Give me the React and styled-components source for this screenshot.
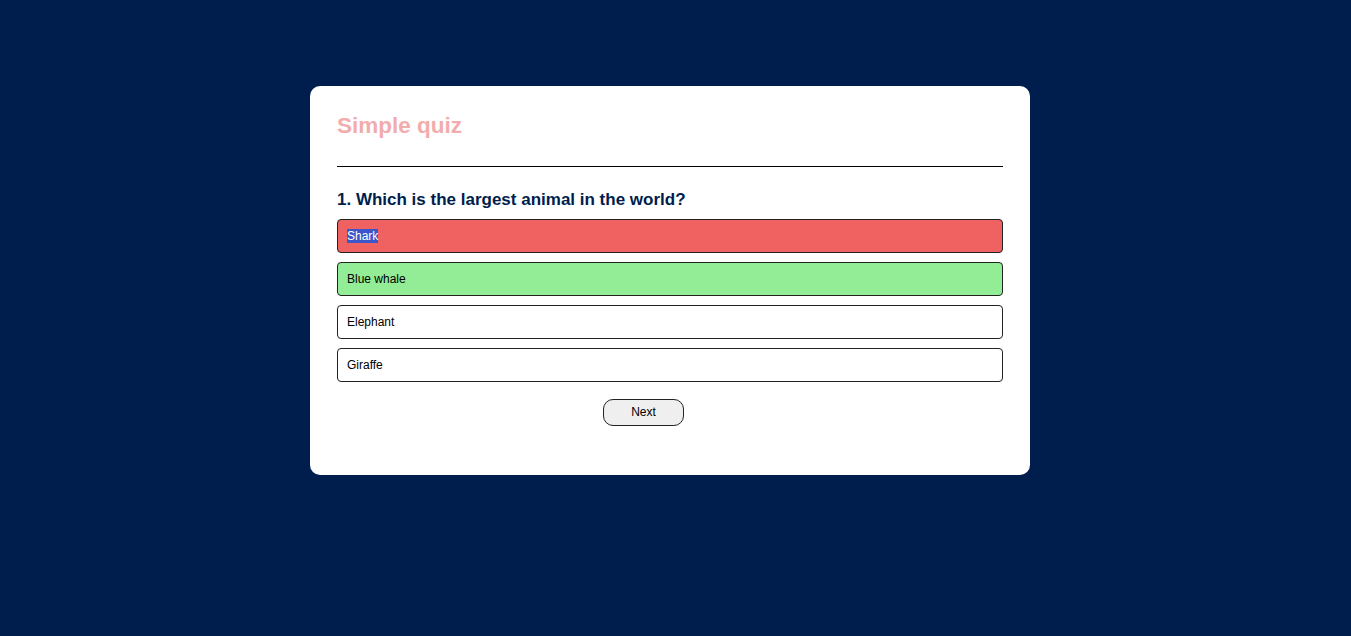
import React from "react";
import styled, { createGlobalStyle } from "styled-components";

const GlobalStyle = createGlobalStyle`
  * {
    margin: 0;
    padding: 0;
    box-sizing: border-box;
  }
  body {
    background: #001e4d;
    font-family: "Liberation Sans", Arial, sans-serif;
  }
`;

const Page = styled.div`
  padding: 86px 11px 0 0;
`;

const Card = styled.div`
  background: #fff;
  width: 720px;
  margin: 0 auto;
  border-radius: 10px;
  padding: 27px 27px 49px;
`;

const Title = styled.h1`
  font-size: 22.5px;
  font-weight: 700;
  color: #f2acac;
  padding-bottom: 27px;
  border-bottom: 1px solid #000;
`;

const Question = styled.h2`
  font-size: 17px;
  font-weight: 700;
  color: #001e4d;
  margin: 23px 0 9px;
`;

const Answers = styled.div`
  display: flex;
  flex-direction: column;
  gap: 9px;
`;

const bgFor = {
  wrong: "#f06262",
  correct: "#93ec96",
  idle: "#fff",
};

const Answer = styled.button`
  display: flex;
  align-items: center;
  width: 100%;
  height: 34px;
  padding: 0 9px;
  background: ${(p) => bgFor[p.$state]};
  border: 1px solid #222;
  border-radius: 4px;
  font-family: "Liberation Sans", Arial, sans-serif;
  font-size: 12px;
  color: #000;
  text-align: left;
`;

const Selected = styled.span`
  background: #3a56c8;
  color: #fff;
`;

const NextButton = styled.button`
  display: block;
  margin: 17px 0 0 266px;
  width: 81px;
  height: 27px;
  padding-bottom: 1px;
  background: #efefef;
  border: 1px solid #222;
  border-radius: 10px;
  font-family: "Liberation Sans", Arial, sans-serif;
  font-size: 12px;
  color: #000;
`;

const answers = [
  { text: "Shark", state: "wrong", selected: true },
  { text: "Blue whale", state: "correct" },
  { text: "Elephant", state: "idle" },
  { text: "Giraffe", state: "idle" },
];

export default function App() {
  return (
    <Page>
      <GlobalStyle />
      <Card>
        <Title>Simple quiz</Title>
        <Question>1. Which is the largest animal in the world?</Question>
        <Answers>
          {answers.map((a) => (
            <Answer key={a.text} $state={a.state}>
              {a.selected ? <Selected>{a.text}</Selected> : a.text}
            </Answer>
          ))}
        </Answers>
        <NextButton>Next</NextButton>
      </Card>
    </Page>
  );
}
